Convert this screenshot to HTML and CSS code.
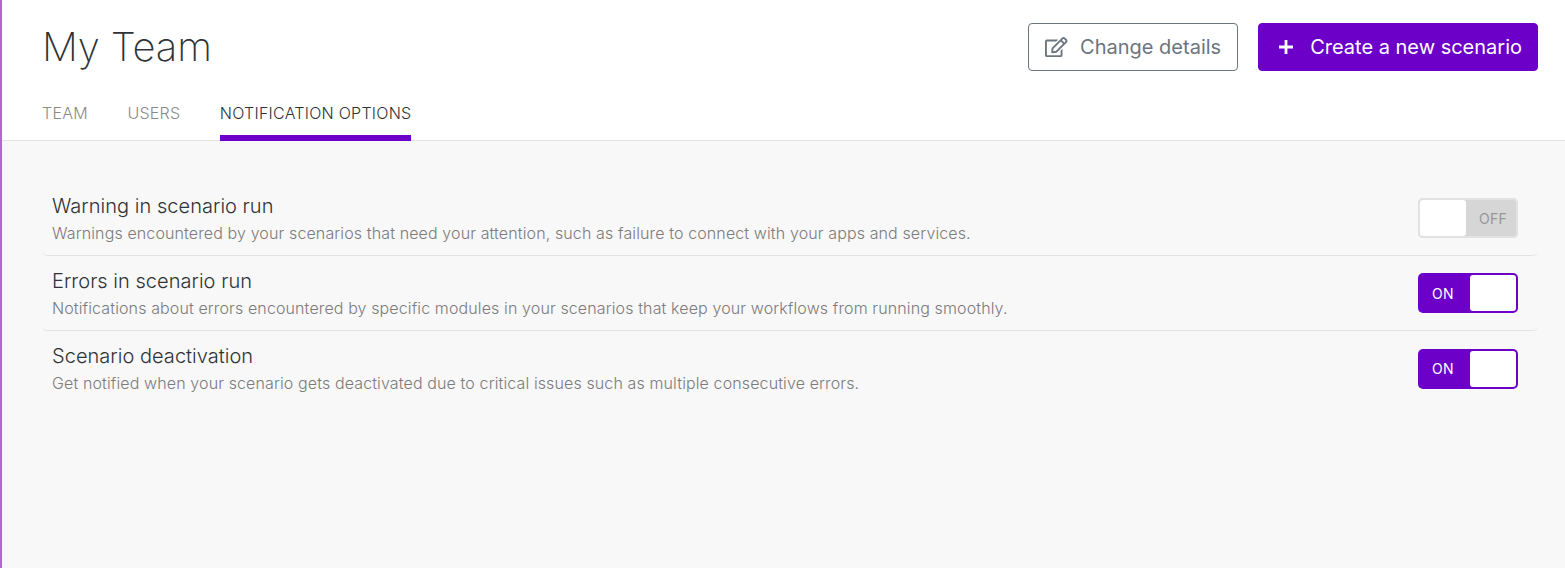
FILE: index.html
```html
<!DOCTYPE html>
<html lang="en">
<head>
<meta charset="utf-8">
<title>My Team</title>
<link rel="stylesheet" href="styles.css">
</head>
<body>
<div class="page">
  <header class="top">
    <div class="title-row">
      <h1 class="title">My Team</h1>
      <div class="actions">
        <button class="btn btn-outline">
          <svg class="icon-edit" width="22.500" height="20" viewBox="0 0 576 512" fill="#6c757d"><path d="M402.300 344.900l32-32c5-5 13.700-1.500 13.700 5.700V464c0 26.500-21.500 48-48 48H48c-26.500 0-48-21.500-48-48V112c0-26.500 21.500-48 48-48h273.500c7.100 0 10.700 8.600 5.700 13.700l-32 32c-1.500 1.500-3.500 2.300-5.700 2.300H48v352h352V350.500c0-2.100.8-4.100 2.300-5.600zm156.600-201.800L296.300 405.700l-90.400 10c-26.200 2.900-48.500-19.200-45.600-45.600l10-90.400L432.900 17.100c22.900-22.900 59.900-22.900 82.700 0l43.200 43.200c22.900 22.900 22.900 60 .1 82.800zM460.100 174L402 115.900 216.200 301.800l-7.300 65.300 65.300-7.300L460.100 174zm64.800-79.700l-43.200-43.200c-4.100-4.100-10.800-4.100-14.800 0L436 82l58.100 58.100 30.900-30.900c4-4.200 4-10.800-.1-14.900z"/></svg>
          <span>Change details</span>
        </button>
        <button class="btn btn-primary">
          <svg width="16" height="16" viewBox="0 0 16 16" stroke="#fff" stroke-width="2.800"><path d="M8 1v14M1 8h14"/></svg>
          <span>Create a new scenario</span>
        </button>
      </div>
    </div>
    <nav class="tabs">
      <a class="tab">TEAM</a>
      <a class="tab">USERS</a>
      <a class="tab active">NOTIFICATION OPTIONS</a>
    </nav>
  </header>
  <main class="content">
    <div class="row">
      <div class="row-text">
        <div class="row-title">Warning in scenario run</div>
        <div class="row-desc">Warnings encountered by your scenarios that need your attention, such as failure to connect with your apps and services.</div>
      </div>
      <div class="switch off"><span class="knob"></span><span class="label">OFF</span></div>
    </div>
    <div class="row">
      <div class="row-text">
        <div class="row-title">Errors in scenario run</div>
        <div class="row-desc">Notifications about errors encountered by specific modules in your scenarios that keep your workflows from running smoothly.</div>
      </div>
      <div class="switch on"><span class="label">ON</span><span class="knob"></span></div>
    </div>
    <div class="row">
      <div class="row-text">
        <div class="row-title">Scenario deactivation</div>
        <div class="row-desc">Get notified when your scenario gets deactivated due to critical issues such as multiple consecutive errors.</div>
      </div>
      <div class="switch on"><span class="label">ON</span><span class="knob"></span></div>
    </div>
  </main>
</div>
</body>
</html>
```
FILE: styles.css
```css
* { box-sizing: border-box; }
html, body { margin: 0; height: 100%; }
body {
  font-family: Inter, "Liberation Sans", sans-serif;
  color: #2f3337;
  background: #fff;
  overflow: hidden;
}
.page {
  height: 568px;
  border-left: 2px solid #b066d3;
  display: flex;
  flex-direction: column;
}
.top {
  background: #fff;
  border-bottom: 1px solid #e3e3e3;
  height: 141px;
  padding: 0 27px 0 40px;
}
.title-row {
  height: 91px;
  display: flex;
  justify-content: space-between;
  align-items: flex-start;
}
.title {
  margin: 21px 0 0;
  font-size: 40px;
  line-height: 52px;
  font-weight: 250;
  letter-spacing: -0.15px;
  color: #2f3337;
}
.actions {
  display: flex;
  gap: 20px;
  padding-top: 23px;
}
.btn {
  height: 48px;
  border-radius: 4px;
  font-family: inherit;
  font-size: 20px;
  font-weight: 400;
  display: flex;
  align-items: center;
  padding: 0 16px;
}
.btn-outline {
  background: #fff;
  border: 1px solid #6c757d;
  color: #6c757d;
  gap: 12.5px;
}
.btn-primary {
  background: #6c00c9;
  border: 1px solid #6c00c9;
  color: #fff;
  gap: 16px;
  padding-left: 19px;
  padding-right: 15px;
}
.tabs {
  display: flex;
  gap: 39.5px;
  height: 50px;
}
.tab {
  font-size: 16px;
  font-weight: 300;
  letter-spacing: 0.25px;
  line-height: 44px;
  color: #8a8a8a;
  height: 50px;
}
.tab.active {
  color: #2f3337;
  border-bottom: 6px solid #6c00c9;
}
.content {
  flex: 1;
  background: #f8f8f8;
  padding: 40px 27px 0 40px;
}
.row {
  height: 75px;
  display: flex;
  justify-content: space-between;
  align-items: center;
  padding: 0 20px 0 10px;
  border-bottom: 1px solid #e3e3e3;
  border-radius: 0 0 5px 5px;
}
.row:last-child { border-bottom: 0; }
.row-title {
  font-size: 20px;
  line-height: 28px;
  font-weight: 300;
  letter-spacing: 0.03px;
  color: #2f3337;
}
.row-desc {
  font-size: 16px;
  line-height: 24px;
  font-weight: 300;
  letter-spacing: 0.12px;
  margin-top: 1px;
  color: #7b7b7b;
}
.switch {
  width: 100px;
  height: 40px;
  border-radius: 5px;
  display: flex;
  align-items: stretch;
  overflow: hidden;
  font-size: 14px;
  letter-spacing: 0.3px;
  padding: 2px;
  flex: none;
}
.switch .label {
  flex: 1;
  display: flex;
  align-items: center;
  justify-content: center;
}
.switch .knob {
  width: 46px;
  background: #fff;
  border-radius: 3px;
}
.switch.on { background: #6c00c9; color: #fff; }
.switch.on .label { padding-right: 4px; }
.switch.off { background: #d6d6d6; color: #969696; box-shadow: inset 0 0 0 2px #e2e2e2; }
.switch.off .label { padding-left: 4px; }
```
